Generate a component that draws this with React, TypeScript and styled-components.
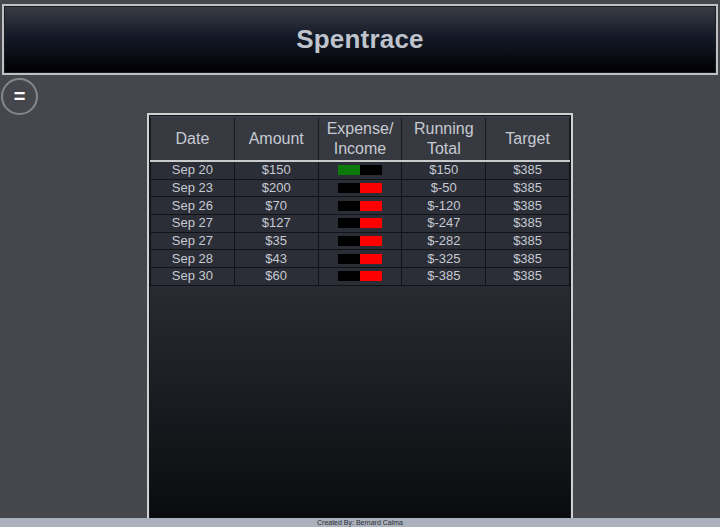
import React from "react";
import styled, { createGlobalStyle } from "styled-components";

const Global = createGlobalStyle`
  html, body { margin: 0; padding: 0; height: 100%; overflow: hidden; }
  body { background: #45474c; font-family: "Liberation Sans", Arial, sans-serif; }
`;

const Page = styled.div`
  display: flex;
  flex-direction: column;
  height: 527px;
  padding-top: 4px;
  box-sizing: border-box;
`;

const Header = styled.header`
  flex-shrink: 0;
  margin: 0 2px;
  height: 71px;
  box-sizing: border-box;
  border: 2px solid #bfc0c2;
  box-shadow: inset 0 0 0 1px #1c1d22;
  background: linear-gradient(to bottom, #3b3d45 0%, #141a28 45%, #000 100%);
  display: flex;
  align-items: center;
  justify-content: center;
`;

const Title = styled.h1`
  margin: 0;
  font-size: 26px;
  font-weight: 700;
  color: #bec3cc;
  letter-spacing: 0.2px;
`;

const Toolbar = styled.div`
  flex-shrink: 0;
  height: 35px;
  padding: 3px 0 0 1px;
  box-sizing: border-box;
`;

const MenuButton = styled.button`
  width: 37px;
  height: 37px;
  border-radius: 50%;
  border: 2px solid #85878a;
  background: transparent;
  color: #fff;
  font-family: "Liberation Sans", Arial, sans-serif;
  font-weight: 700;
  font-size: 20px;
  line-height: 1;
  padding: 0 0 2px;
  display: flex;
  align-items: center;
  justify-content: center;
  box-sizing: border-box;
`;

const Panel = styled.main`
  flex-shrink: 0;
  align-self: center;
  width: 426px;
  height: 430px;
  margin-top: 3px;
  box-sizing: border-box;
  border: 2px solid #cfd0d2;
  border-bottom: none;
  padding: 3px 1px 0 1px;
  box-shadow: inset 0 0 0 1px #15161a;
  background: linear-gradient(to bottom, #3a3d44 0%, #25282f 45%, #07080a 100%);
`;

const Table = styled.table`
  width: 100%;
  border-collapse: collapse;
  table-layout: fixed;
  color: #c6cad2;
`;

const Th = styled.th`
  height: 42px;
  padding: 0;
  font-weight: 400;
  font-size: 16px;
  line-height: 20px;
  background: #363940;
  border-left: 1px solid #1a1b1f;
  border-right: 1px solid #1a1b1f;
  border-bottom: 2px solid #c9cacc;
  text-align: center;
`;

const Td = styled.td`
  height: 16.67px;
  padding: 0;
  font-size: 13px;
  line-height: 16px;
  text-align: center;
  background: #2b2e36;
  border: 1px solid #121317;
`;

const Bar = styled.div`
  margin: 0 auto;
  width: 44px;
  height: 10px;
  display: flex;
  background: #000;
`;

const Half = styled.div<{ $color: string }>`
  flex: 1;
  background: ${(p) => p.$color};
`;

const Footer = styled.footer`
  position: fixed;
  left: 0;
  right: 0;
  bottom: 0;
  height: 9px;
  background: #aab1bd;
  color: #2a2d33;
  font-size: 7px;
  line-height: 9px;
  text-align: center;
`;

const rows = [
  { date: "Sep 20", amount: "$150", income: true, total: "$150" },
  { date: "Sep 23", amount: "$200", income: false, total: "$-50" },
  { date: "Sep 26", amount: "$70", income: false, total: "$-120" },
  { date: "Sep 27", amount: "$127", income: false, total: "$-247" },
  { date: "Sep 27", amount: "$35", income: false, total: "$-282" },
  { date: "Sep 28", amount: "$43", income: false, total: "$-325" },
  { date: "Sep 30", amount: "$60", income: false, total: "$-385" },
];

export default function App() {
  return (
    <>
      <Global />
      <Page>
        <Header>
          <Title>Spentrace</Title>
        </Header>
        <Toolbar>
          <MenuButton>=</MenuButton>
        </Toolbar>
        <Panel>
          <Table>
            <thead>
              <tr>
                <Th>Date</Th>
                <Th>Amount</Th>
                <Th>
                  Expense/
                  <br />
                  Income
                </Th>
                <Th>
                  Running
                  <br />
                  Total
                </Th>
                <Th>Target</Th>
              </tr>
            </thead>
            <tbody>
              {rows.map((r, i) => (
                <tr key={i}>
                  <Td>{r.date}</Td>
                  <Td>{r.amount}</Td>
                  <Td>
                    <Bar>
                      <Half $color={r.income ? "#0a7a0a" : "#000"} />
                      <Half $color={r.income ? "#000" : "#ff0000"} />
                    </Bar>
                  </Td>
                  <Td>{r.total}</Td>
                  <Td>$385</Td>
                </tr>
              ))}
            </tbody>
          </Table>
        </Panel>
      </Page>
      <Footer>Created By: Bernard Calma</Footer>
    </>
  );
}
